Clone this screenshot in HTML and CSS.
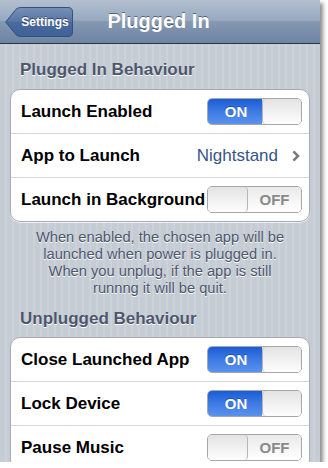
FILE: index.html
```html
<!DOCTYPE html>
<html>
<head>
<meta charset="utf-8">
<link rel="stylesheet" href="styles.css">
</head>
<body>
<div class="screen">
  <div class="navbar">
    <div class="nav-left">
      <div class="back">
        <svg class="back-shape" width="68" height="30" viewBox="0 0 68 30">
          <defs>
            <linearGradient id="bg" x1="0" y1="0" x2="0" y2="1">
              <stop offset="0" stop-color="#7890b7"/>
              <stop offset="0.5" stop-color="#5573a4"/>
              <stop offset="0.5" stop-color="#4a6a9d"/>
              <stop offset="1" stop-color="#3f6199"/>
            </linearGradient>
          </defs>
          <path d="M0.7 15 L11 2.3 Q12.8 0.5 15.5 0.5 L63 0.5 Q67.5 0.5 67.5 5 L67.5 25 Q67.5 29.5 63 29.5 L15.5 29.5 Q12.8 29.5 11 27.7 Z" fill="url(#bg)" stroke="#34507c" stroke-width="1"/>
        </svg>
        <span class="back-label">Settings</span>
      </div>
    </div>
    <div class="title">Plugged In</div>
    <div class="nav-right"></div>
  </div>

  <div class="section-header first">Plugged In Behaviour</div>
  <div class="card">
    <div class="row">
      <span class="label">Launch Enabled</span>
      <div class="switch"><span class="on-part">ON</span><span class="thumb thumb-right"></span></div>
    </div>
    <div class="row">
      <span class="label">App to Launch</span>
      <span class="value">Nightstand
        <svg class="chevron" width="8" height="12" viewBox="0 0 8 12"><path d="M1.4 1.3 L6 6 L1.4 10.7" fill="none" stroke="#7b7b7b" stroke-width="2.6"/></svg>
      </span>
    </div>
    <div class="row">
      <span class="label">Launch in Background</span>
      <div class="switch"><span class="thumb thumb-left"></span><span class="off-part">OFF</span></div>
    </div>
  </div>
  <div class="footer">When enabled, the chosen app will be<br>launched when power is plugged in.<br>When you unplug, if the app is still<br>runnng it will be quit.</div>

  <div class="section-header second">Unplugged Behaviour</div>
  <div class="card">
    <div class="row">
      <span class="label">Close Launched App</span>
      <div class="switch"><span class="on-part">ON</span><span class="thumb thumb-right"></span></div>
    </div>
    <div class="row">
      <span class="label">Lock Device</span>
      <div class="switch"><span class="on-part">ON</span><span class="thumb thumb-right"></span></div>
    </div>
    <div class="row">
      <span class="label">Pause Music</span>
      <div class="switch"><span class="thumb thumb-left"></span><span class="off-part">OFF</span></div>
    </div>
  </div>
</div>
</body>
</html>
```

FILE: styles.css
```css
html, body {
  margin: 0;
  padding: 0;
  background: #ffffff;
}

body {
  font-family: "Liberation Sans", Arial, sans-serif;
}

.screen {
  width: 320px;
  height: 462px;
  overflow: hidden;
  box-shadow: 3px 3px 4px rgba(0, 0, 0, 0.45);
  background: repeating-linear-gradient(90deg, #c5ccd4 0, #c5ccd4 5px, #cbd2d9 5px, #cbd2d9 7px);
}

.navbar {
  height: 43px;
  border-bottom: 1px solid #2d3642;
  background: linear-gradient(#b4c0d1 0%, #95a7bf 50%, #8598b3 50%, #6d84a3 100%);
  display: grid;
  grid-template-columns: 1fr auto 1fr;
  align-items: center;
}

.nav-left {
  display: flex;
  align-items: center;
}

.back {
  position: relative;
  width: 68px;
  height: 30px;
  margin-left: 5px;
  display: flex;
  align-items: center;
  justify-content: center;
  padding-left: 12px;
  box-sizing: border-box;
}

.back-shape {
  position: absolute;
  left: 0;
  top: 0;
}

.back-label {
  position: relative;
  color: #ffffff;
  font-weight: bold;
  font-size: 12px;
  text-shadow: 0 -1px 0 rgba(0, 0, 0, 0.45);
}

.title {
  color: #ffffff;
  font-weight: bold;
  font-size: 20px;
  text-shadow: 0 -1px 0 rgba(0, 0, 0, 0.45);
  margin-left: -3px;
}

.section-header {
  font-weight: bold;
  font-size: 17px;
  line-height: 20px;
  color: #4c566c;
  text-shadow: 0 1px 0 #ffffff;
  padding-left: 20px;
}

.section-header.first {
  margin-top: 16px;
  margin-bottom: 9px;
}

.section-header.second {
  margin-top: 12px;
  margin-bottom: 8px;
}

.card {
  margin: 0 10px;
  background: #ffffff;
  border: 1px solid #a8abb0;
  border-radius: 10px;
  box-shadow: 0 1px 0 rgba(255, 255, 255, 0.7);
}

.row {
  height: 43px;
  display: flex;
  align-items: center;
  justify-content: space-between;
  padding: 0 7px 0 10px;
}

.row + .row {
  border-top: 1px solid #d9d9d9;
}

.label {
  font-weight: bold;
  font-size: 17px;
  color: #000000;
}

.value {
  display: flex;
  align-items: center;
  gap: 14px;
  font-size: 17px;
  color: #385487;
  padding-right: 2px;
}

.chevron {
  display: block;
}

.switch {
  width: 95px;
  height: 27px;
  box-sizing: border-box;
  border: 1px solid #a7a7a7;
  border-radius: 5px;
  overflow: hidden;
  display: flex;
  background: linear-gradient(#e6e6e6, #fdfdfd);
}

.on-part {
  width: 54px;
  display: flex;
  align-items: center;
  justify-content: center;
  background: linear-gradient(#1b5cd6 0%, #3d7ae3 50%, #5a92ec 100%);
  color: #ffffff;
  font-weight: bold;
  font-size: 15px;
  text-shadow: 0 -1px 0 rgba(0, 0, 0, 0.3);
  padding-left: 2px;
  box-sizing: border-box;
}

.off-part {
  flex: 1;
  display: flex;
  align-items: center;
  justify-content: center;
  color: #8a8a8a;
  font-weight: bold;
  font-size: 15px;
  background: linear-gradient(#eaeaea, #ffffff);
}

.thumb {
  width: 39px;
  background: linear-gradient(#e3e3e3, #fdfdfd);
}

.thumb-right {
  flex: 1;
  border-left: 1px solid #b5b5b5;
  border-radius: 4px 0 0 4px;
}

.thumb-left {
  width: 39px;
  border-right: 1px solid #b5b5b5;
  border-radius: 0 4px 4px 0;
}

.footer {
  margin: 7px 10px 0;
  text-align: center;
  font-size: 14.7px;
  line-height: 17px;
  color: #4c566c;
  text-shadow: 0 1px 0 #ffffff;
}
```
